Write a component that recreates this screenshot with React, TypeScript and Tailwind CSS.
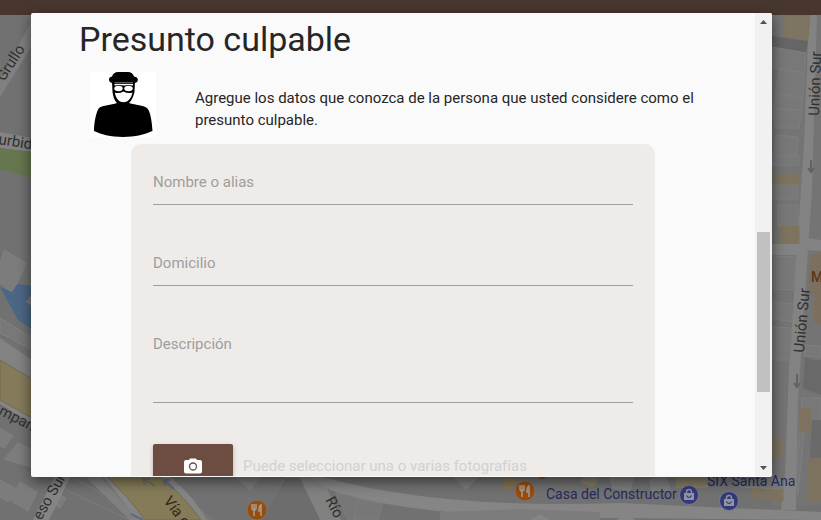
import React from "react";

function MapBackdrop() {
  return (
    <svg
      className="absolute inset-0 h-full w-full"
      viewBox="0 0 821 520"
      preserveAspectRatio="xMinYMin slice"
      fontFamily="Roboto, sans-serif"
      aria-hidden="true"
    >
      <rect width="821" height="520" fill="#717171" />

      {/* west side */}
      <path d="M0 80L32 20V46L0 97Z" fill="#808080" />
      <path d="M0 132L32 138V152L0 148Z" fill="#848484" />
      <path d="M0 148L32 152V178L0 169Z" fill="#66774f" />
      <path d="M4 250L26 263L13 293L-4 280Z" fill="#7c7c7c" stroke="#808080" />
      <path d="M0 287L12 292L17 284L32 286V329L18 320Z" fill="#4c6785" />
      <path d="M26 302L32 294V306Z" fill="#7c7c7c" />
      <path d="M0 318L32 338V350L0 333Z" fill="#787878" stroke="#808080" />
      <path d="M0 338L32 360V380L0 360Z" fill="#828282" />
      <path d="M0 360L32 379L120 450L190 520H130L32 424L0 404Z" fill="#858585" />
      <path d="M0 360L32 379V418L0 400Z" fill="#857b5b" stroke="#746b50" />
      <g fill="#7c7c7c" stroke="#808080">
        <path d="M-2 427L13 436L4 448L-4 443Z" />
        <path d="M18 443L32 450V467L4 459Z" />
        <path d="M0 480L15 488L8 502L-4 495Z" />
        <path d="M20 482L37 492L28 511L10 500Z" />
        <path d="M56 493L66 498L60 508L52 503Z" />
      </g>
      <path d="M58 470L33 520H49L74 470Z" fill="#858585" />

      {/* south-west avenue */}
      <path d="M66 490L130 520M74 478L150 520M90 476L165 520" stroke="#7d7d7d" fill="none" />
      <path d="M78 470L145 520H215L150 470Z" fill="#777777" />
      <path d="M82 470L130 520H138L94 470Z" fill="#808080" />
      <path d="M98 470H160Q190 490 207 520H138Z" fill="#858585" />
      <path d="M100 470H150Q180 490 201 520H145Q128 496 100 470Z" fill="#857b58" stroke="#746b50" />
      <path d="M155 486L143 479M143 479L145 485M143 479L150 479" stroke="#6f6b5d" strokeWidth="2" fill="none" />
      <path d="M174 489L164 480M164 480L165 486M164 480L170 480M143 520L131 514" stroke="#5f6b7c" strokeWidth="2" fill="none" />
      <path d="M233 475L250 491L262 475Z" fill="#7b7b7b" />

      {/* southern road */}
      <path d="M288 470L263 520H271L300 480L320 520H341L319 470Z" fill="#818181" />
      <path d="M300 470Q420 510 620 503L821 512V520L620 518Q420 520 330 490Z" fill="#858585" />
      <path d="M285 478L262 520H320L300 478Z" fill="#6d6d6d" />
      <path d="M336 493L382 504L378 520H348ZM359 498L354 520" fill="#777777" stroke="#7e7e7e" />
      <path d="M440 512L520 509L600 512V520H440Z" fill="#7c7c7c" />
      <path d="M450 474L466 490L482 474Z" fill="#7d7d7d" />
      <path d="M508 475L518 482L510 491L502 486Z" fill="#837451" />
      <path d="M585 474L600 478L593 487L580 483Z" fill="#837b67" />
      <path d="M610 478L635 472L630 490L613 488ZM650 480L665 474L670 490L652 491Z" fill="#7c7c7c" stroke="#808080" />
      <path d="M676 477H708V488H676Z" fill="#837b65" />
      <path d="M540 514L550 520H530ZM626 515L636 520H616Z" fill="#858585" />

      {/* east side */}
      <path d="M772 15H821V505H772Z" fill="#747474" />
      <path d="M809 15L804 145L789 370L785 475L781 510H796L798 400L812 190L817 15Z" fill="#838383" />
      <path d="M772 244H800V255H772ZM808 238L821 240V251L806 250Z" fill="#838383" />
      <path d="M785 15H810L808 39L784 36Z" fill="#7d7561" stroke="#80745a" />
      <path d="M772 36L808 41L806 53L772 47Z" fill="#666666" />
      <g fill="#787878" stroke="#7f7f7f">
        <path d="M772 47L806 53L804 73L772 68Z" />
        <path d="M780 69L804 73L803 98L775 92Z" />
        <path d="M776 94L802 99V110L774 108Z" />
        <path d="M774 110H802L799 128H775Z" />
        <path d="M776 135L798 137L797 155H774Z" />
        <path d="M772 156H799V165H772ZM772 185H798V199H772Z" />
        <path d="M778 205H798V226H778ZM774 256L796 257L793 290L774 289Z" />
        <path d="M772 302L794 304L792 322L772 318ZM772 327L792 328L790 360H772Z" />
        <path d="M805 345L821 346V357L804 356Z" />
        <path d="M802 398H821V422H805L798 494L796 480Z" />
      </g>
      <path d="M813 360H821V395L803 388L805 357Z" fill="#696969" />
      <path d="M812 420H821V458H810Z" fill="#6a6a6a" />
      <path d="M774 175H800V184H774ZM781 226H799V243H780Z" fill="#7c745f" stroke="#80735b" />
      <path d="M811 255L821 254V294L809 293ZM815 295H821V324L814 322Z" fill="#7a6f60" stroke="#806f5b" />
      <path d="M801 408L811 409L810 433L800 431ZM772 439H782V457H772ZM809 459H821V501L807 500Z" fill="#7b725f" stroke="#80735b" />
      <path d="M753 488L783 490V501L752 497Z" fill="#7b725f" stroke="#80735b" />
      <path d="M740 479H782V489L740 487Z" fill="#787878" stroke="#7f7f7f" />
      <g stroke="#5f6268" strokeWidth="2" fill="none">
        <path d="M811 160V171M808 168L811 172L814 168" />
        <path d="M797 374V386M794 383L797 387L800 383" />
      </g>

      {/* street names */}
      <g fill="#303030" fontSize="15">
        <text transform="translate(4 82) rotate(-57)">Grullo</text>
        <text transform="translate(-2 144) rotate(9)">urbide</text>
        <text transform="translate(-2 414) rotate(27)">mpan</text>
        <text transform="translate(41 521) rotate(-60)">eso Sur</text>
        <text transform="translate(819 116) rotate(-88)">Unión Sur</text>
        <text transform="translate(804 353) rotate(-85)">Unión Sur</text>
        <text transform="translate(325 500) rotate(62)">Río</text>
      </g>
      <text transform="translate(163 501) rotate(53)" fill="#38251a" fontSize="15">Vía c</text>

      {/* places */}
      <text x="811" y="282" fill="#5f3516" fontSize="14" fontWeight="500">M</text>
      <text x="546" y="499" fill="#25295f" fontSize="14">Casa del Constructor</text>
      <text x="707" y="486" fill="#25295f" fontSize="14">SIX Santa Ana</text>
      <FoodPin x={257} y={510} />
      <FoodPin x={525} y={491} />
      <circle cx="542" cy="474" r="5" fill="#8b4b14" />
      <ShopPin x={689} y={495} />
      <ShopPin x={729} y={501} />
    </svg>
  );
}

function FoodPin({ x, y }: { x: number; y: number }) {
  return (
    <g transform={`translate(${x} ${y})`}>
      <circle r="10" fill="#974d0d" stroke="#817468" />
      <path
        d="M-5 -6V-2Q-5 0 -3 0V6M-3 -6V0M-1 -6V-2Q-1 0 -3 0M4 6V-5Q2 -4 2 1H4"
        stroke="#a69c94"
        strokeWidth="1.500"
        fill="none"
      />
    </g>
  );
}

function ShopPin({ x, y }: { x: number; y: number }) {
  return (
    <g transform={`translate(${x} ${y})`}>
      <circle r="9.500" fill="#34397a" stroke="#787b8f" />
      <path d="M-5 -2H5V5H-5Z" fill="#9293a0" />
      <path d="M-2.500 -2V-3Q-2.500 -5.500 0 -5.500T2.500 -3V-2" stroke="#9293a0" strokeWidth="1.400" fill="none" />
      <path d="M-2.500 0.500Q0 4.500 2.500 0.500" stroke="#34397a" strokeWidth="1.200" fill="none" />
    </g>
  );
}

function Suspect() {
  return (
    <svg className="h-[65px] w-[66px] shrink-0 bg-white" viewBox="0 0 66 65" role="img" aria-label="Presunto culpable">
      <path d="M22 11C18 10 18 5 22 4.500C23 1.500 25 0 28 0H38C41 0 43 1.500 44 4.500C49 5 49 10 45 11Z" />
      <path d="M22 10H45L44.500 20C43.500 25 41 29 39 31C46 33 53 33 57 36C61 40 62 52 62.500 59C56 62 45 65 33 65C21 65 10 62 4 59C4 51 6 40 9 36C13 33 21 33 27 31C25 29 23 25 22.500 20Z" />
      <path d="M24.500 10.800H43" stroke="#bbb" strokeWidth="0.700" />
      <path d="M24.500 12H43V13.500Q38 12.500 34 13.500Q29 12.500 24.500 13.500Z" fill="#fff" />
      <ellipse cx="28.500" cy="16.500" rx="4.200" ry="2.700" fill="#fff" />
      <ellipse cx="38.500" cy="16.500" rx="4.200" ry="2.700" fill="#fff" />
      <path d="M24.800 20.500Q29 22 33.500 19.500Q38 22 42.500 20.500Q41 27 37 29.500Q33.500 31 30 29.500Q26 27 24.800 20.500Z" fill="#fff" />
    </svg>
  );
}

const labelClass = "pointer-events-none absolute left-0 top-[11px] text-[15px] leading-[22px] text-[#9e9e9e]";
const fieldClass = "block w-full resize-none rounded-none border-b border-[#9e9e9e] bg-transparent text-[15px] outline-none";

function Field({ id, label, multiline = false }: { id: string; label: string; multiline?: boolean }) {
  return (
    <div className="relative">
      {multiline ? (
        <textarea id={id} className={`${fieldClass} h-[81px] pt-3`} />
      ) : (
        <input id={id} type="text" className={`${fieldClass} h-[45px]`} />
      )}
      <label htmlFor={id} className={labelClass}>
        {label}
      </label>
    </div>
  );
}

function ScrollTrack() {
  return (
    <div className="flex w-[17px] shrink-0 flex-col items-center bg-[#f1f1f1]" aria-hidden="true">
      <svg className="h-[17px] w-[17px] shrink-0" viewBox="0 0 17 17">
        <path d="M5 11H12L8.500 7Z" fill="#505050" />
      </svg>
      <div className="grow-[202]" />
      <div className="w-[13px] grow-[161] bg-[#c1c1c1]" />
      <div className="grow-[67]" />
      <svg className="h-[17px] w-[17px] shrink-0" viewBox="0 0 17 17">
        <path d="M5 7H12L8.500 11Z" fill="#505050" />
      </svg>
    </div>
  );
}

export default function App() {
  return (
    <div className="relative h-screen overflow-hidden font-['Roboto',sans-serif] text-[15px] leading-[22px] text-[#262626]">
      <MapBackdrop />
      <div className="absolute inset-x-0 top-0 h-[15px] bg-[#48372f]" />
      <div className="relative h-full pt-[13px] pr-[49px] pb-[43px] pl-[31px]">
        <section
          role="dialog"
          aria-labelledby="dialog-title"
          className="flex h-full overflow-hidden rounded-[2px] bg-[#fafafa] pb-px shadow-[0_4px_14px_rgba(0,0,0,0.55)]"
        >
          <div className="min-w-0 flex-1 overflow-hidden pt-[6px]">
            <h1 id="dialog-title" className="px-12 text-[34px] leading-[40px]">
              Presunto culpable
            </h1>
            <div className="mt-[13px] flex items-start pr-12 pl-[59px]">
              <Suspect />
              <p className="ml-[39px] pt-[15px]">
                Agregue los datos que conozca de la persona que usted considere como el presunto culpable.
              </p>
            </div>
            <form className="mx-[100px] mt-[7px] rounded-[10px] bg-[#efebe9] px-[22px] pt-4 pb-8">
              <div className="flex flex-col gap-9">
                <Field id="nombre" label="Nombre o alias" />
                <Field id="domicilio" label="Domicilio" />
                <Field id="descripcion" label="Descripción" multiline />
              </div>
              <div className="mt-[41px] flex gap-[10px]">
                <button
                  type="button"
                  aria-label="Agregar fotografías"
                  className="flex h-11 w-20 shrink-0 items-center justify-center rounded-[2px] bg-[#6d4c41] shadow-[0_2px_4px_rgba(0,0,0,0.25)]"
                >
                  <svg className="h-4 w-[18px]" viewBox="0 0 18 16">
                    <path d="M2 2H5L6 0.500H12L13 2H16Q18 2 18 4V13.500Q18 15.500 16 15.500H2Q0 15.500 0 13.500V4Q0 2 2 2Z" fill="#fff" />
                    <circle cx="9" cy="8.500" r="3.500" fill="none" stroke="#6d4c41" strokeWidth="1.300" />
                  </svg>
                </button>
                <input
                  type="text"
                  readOnly
                  aria-label="Fotografías"
                  placeholder="Puede seleccionar una o varias fotografías"
                  className="h-11 min-w-0 flex-1 border-b border-[#9e9e9e] bg-transparent text-[15px] outline-none placeholder:text-[#d1d1d1]"
                />
              </div>
            </form>
          </div>
          <ScrollTrack />
        </section>
      </div>
    </div>
  );
}
